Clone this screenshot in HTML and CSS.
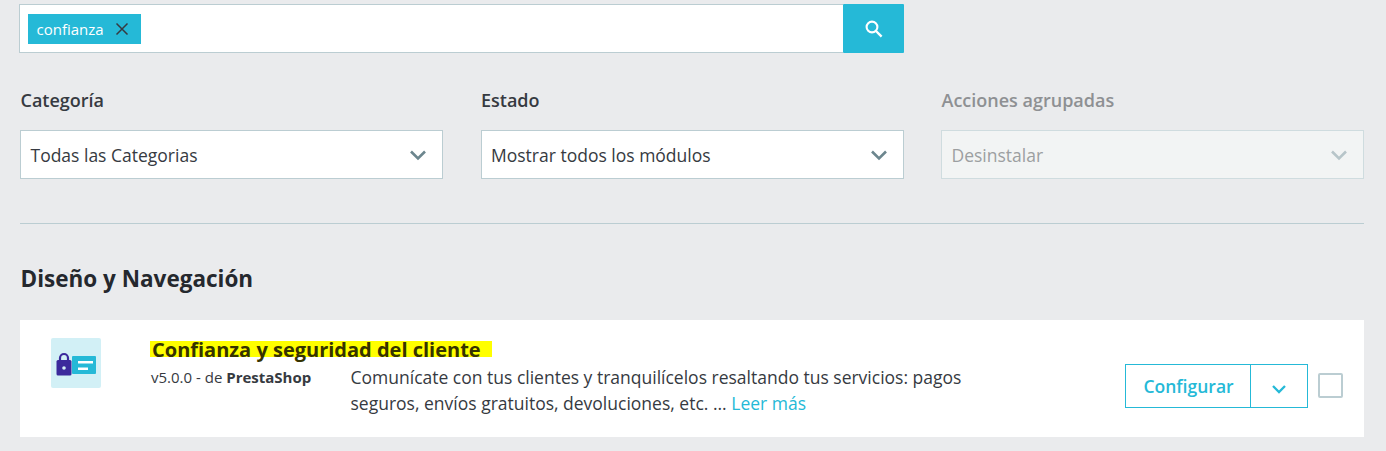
FILE: index.html
```html
<!DOCTYPE html>
<html lang="es">
<head>
<meta charset="utf-8">
<title>Módulos</title>
<link rel="stylesheet" href="styles.css">
</head>
<body>
<main class="page">
  <div class="search">
    <div class="search-field">
      <span class="tag">confianza
        <svg class="tag-x" width="14" height="14" viewBox="0 0 14 14"><path d="M1.5 1.5l11 11M12.5 1.5l-11 11" fill="none" stroke="#363a41" stroke-width="1.5"/></svg>
      </span>
    </div>
    <button class="search-btn" type="button" aria-label="Buscar">
      <svg width="20" height="20" viewBox="0 0 20 20"><circle cx="8" cy="8" r="5.4" fill="none" stroke="#fff" stroke-width="2.1"/><path d="M12 12l5.6 5.6" fill="none" stroke="#fff" stroke-width="2.4"/></svg>
    </button>
  </div>

  <div class="filters">
    <div class="filter">
      <div class="filter-label">Categoría</div>
      <div class="select"><span>Todas las Categorias</span>
        <svg class="chev" width="18" height="12" viewBox="0 0 18 12"><path d="M2 2.5l7 7 7-7" fill="none" stroke="#6c868e" stroke-width="2.6"/></svg>
      </div>
    </div>
    <div class="filter">
      <div class="filter-label">Estado</div>
      <div class="select"><span>Mostrar todos los módulos</span>
        <svg class="chev" width="18" height="12" viewBox="0 0 18 12"><path d="M2 2.5l7 7 7-7" fill="none" stroke="#6c868e" stroke-width="2.6"/></svg>
      </div>
    </div>
    <div class="filter filter-disabled">
      <div class="filter-label">Acciones agrupadas</div>
      <div class="select"><span>Desinstalar</span>
        <svg class="chev" width="18" height="12" viewBox="0 0 18 12"><path d="M2 2.5l7 7 7-7" fill="none" stroke="#b7c5c9" stroke-width="2.6"/></svg>
      </div>
    </div>
  </div>

  <hr class="rule">

  <h2 class="section-title">Diseño y Navegación</h2>

  <article class="card">
    <div class="logo">
      <svg width="50" height="50" viewBox="0 0 50 50">
        <rect width="50" height="50" rx="2" fill="#d2f0f6"/>
        <rect x="21" y="18" width="24" height="18" rx="1" fill="#25b9d7"/>
        <rect x="27" y="23" width="15" height="2.500" fill="#fff"/>
        <rect x="27" y="29.500" width="10" height="2.500" fill="#fff"/>
        <path d="M9 23v-3a4 4 0 0 1 8 0v3" fill="none" stroke="#3b2a9c" stroke-width="2.200"/>
        <rect x="5.500" y="22" width="15" height="15.500" rx="1.500" fill="#3b2a9c"/>
        <circle cx="13" cy="30" r="1.800" fill="#d2f0f6"/>
      </svg>
    </div>
    <div class="info">
      <h3 class="module-name"><mark class="hl">Confianza y seguridad del cliente&nbsp;&nbsp;</mark></h3>
      <div class="details">
        <div class="version">v5.0.0 - de <b>PrestaShop</b></div>
        <p class="desc">Comunícate con tus clientes y tranquilícelos resaltando tus servicios: pagos seguros, envíos gratuitos, devoluciones, etc. ... <a class="more" href="#">Leer más</a></p>
      </div>
    </div>
    <div class="actions">
      <div class="btn-group">
        <button class="btn-main" type="button">Configurar</button>
        <button class="btn-drop" type="button" aria-label="Más">
          <svg width="16" height="10" viewBox="0 0 16 10"><path d="M2 2l6 6 6-6" fill="none" stroke="#25b9d7" stroke-width="2.3"/></svg>
        </button>
      </div>
      <span class="check"></span>
    </div>
  </article>
</main>
</body>
</html>
```
FILE: styles.css
```css
* { box-sizing: border-box; }
html, body { margin: 0; padding: 0; }
body {
  background: #eaebed;
  color: #363a41;
  font-family: "Open Sans", "Noto Sans", sans-serif;
  font-variant-ligatures: none;
  height: 451px;
  overflow: hidden;
}
.page { padding: 4px 22px 0 20px; }

.search { display: flex; width: 885px; height: 49px; margin-left: -1px; }
.search-field {
  flex: 1;
  background: #fff;
  border: 1px solid #bbcdd2;
  border-right: 0;
  padding: 9px 8px;
}
.tag {
  display: inline-flex;
  align-items: center;
  height: 30px;
  width: 113px;
  padding-left: 8.5px;
  background: #25b9d7;
  color: #fff;
  font-size: 15px;
}
.tag-x { margin-left: 11px; }
.search-btn {
  width: 61px;
  border: 0;
  padding: 0;
  background: #25b9d7;
  border-radius: 1px;
  display: flex;
  align-items: center;
  justify-content: center;
}

.filters {
  display: grid;
  grid-template-columns: repeat(3, 423px);
  column-gap: 37.5px;
  margin-top: 35px;
}
.filter-label {
  font-size: 18px;
  font-weight: 600;
  line-height: 24px;
  margin-bottom: 18px;
  padding-left: 0.5px;
}
.select {
  display: flex;
  align-items: center;
  justify-content: space-between;
  height: 49px;
  padding: 0 15px 0 9.5px;
  background: #fff;
  border: 1px solid #bbcdd2;
  font-size: 17.5px;
}
.filter-disabled .filter-label { color: #8e9093; }
.filter-disabled .select {
  background: #f2f4f4;
  border-color: #cfdcdf;
  color: #9c9fa1;
}

.rule {
  margin: 44px 0 0;
  border: 0;
  border-top: 1px solid #bbcdd2;
}
.section-title {
  margin: 38px 0 0 0.5px;
  font-size: 22.5px;
  line-height: 34px;
  font-weight: 700;
  color: #25282e;
}

.card {
  display: flex;
  height: 117px;
  margin-top: 24px;
  background: #fff;
}
.logo { width: 130px; padding: 18px 0 0 31px; }
.logo svg { display: block; }
.info { width: 831px; padding-top: 21px; }
.module-name {
  margin: 0;
  height: 22px;
  font-size: 20px;
  line-height: 18px;
  font-weight: 700;
}
.hl {
  display: inline-block;
  height: 16px;
  width: 342px;
  padding-left: 2px;
  background: #ff0;
  color: #363300;
  white-space: nowrap;
  vertical-align: top;
}
.details { display: flex; margin-top: 1px; }
.version {
  width: 200.5px;
  padding-left: 1px;
  font-size: 15px;
  line-height: 26px;
  flex: none;
}
.version b { font-weight: 700; }
.desc {
  margin: 0;
  width: 630px;
  font-size: 17.5px;
  line-height: 26px;
}
.more { color: #25b9d7; text-decoration: none; }

.actions {
  flex: 1;
  display: flex;
  align-items: flex-start;
  justify-content: flex-end;
  padding: 44px 21px 0 0;
}
.btn-group { display: flex; height: 44px; }
.btn-main, .btn-drop {
  background: #fff;
  border: 1px solid #25b9d7;
  color: #25b9d7;
  font-family: inherit;
  font-size: 17.5px;
  font-weight: 600;
  padding: 0;
}
.btn-main { width: 125px; border-right: 0; padding-left: 1px; }
.btn-drop {
  width: 58px;
  display: flex;
  align-items: center;
  justify-content: center;
  padding-top: 5px;
}
.check {
  width: 25px;
  height: 25px;
  margin: 9px 0 0 10px;
  border: 2px solid #bbcdd2;
  border-radius: 2px;
  background: #fff;
}
```
